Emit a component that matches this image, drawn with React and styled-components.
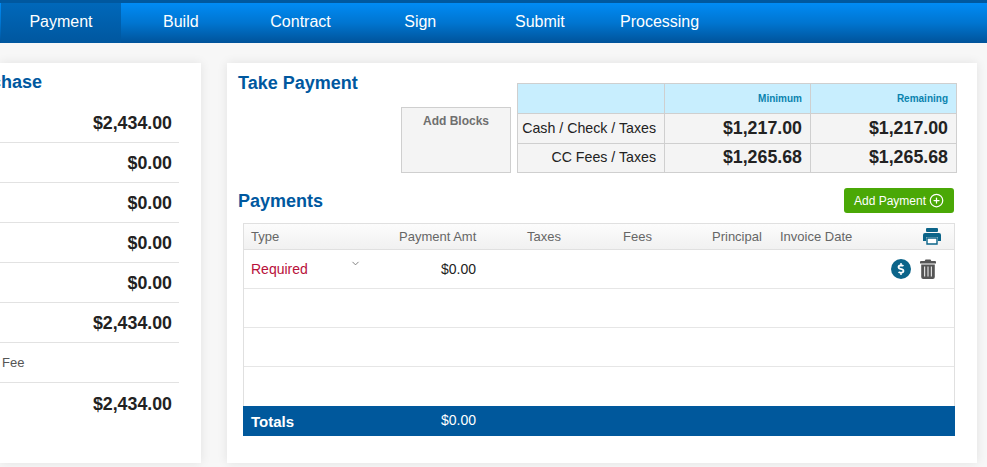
import React from "react";
import styled, { createGlobalStyle } from "styled-components";
import { ChevronDown, CirclePlus } from "lucide-react";
import { FaDollarSign } from "react-icons/fa";

const Global = createGlobalStyle`
	html, body {
		margin: 0;
		height: 467px;
		overflow: hidden;
		background: #f7f7f7;
		font-family: "Liberation Sans", Arial, sans-serif;
	}
	* { box-sizing: border-box; }
`;

const Nav = styled.nav`
	display: flex;
	height: 43px;
	padding-left: 1px;
	border-top: 3px solid #00589f;
	background: linear-gradient(#008bf5, #0075d0 50%, #00539a);
`;

const Tab = styled.div`
	width: ${props => (props.active ? "120px" : "119.7px")};
	display: flex;
	align-items: center;
	justify-content: center;
	padding-bottom: 2px;
	color: #fff;
	font-size: 16px;
	background: ${props => (props.active ? "linear-gradient(#0068ba, #00579f)" : "transparent")};
`;

const Main = styled.main`
	display: flex;
	gap: 26px;
	padding-top: 20px;
`;

const Card = styled.section`
	height: 400px;
	background: #fff;
	box-shadow: 0 0 10px rgba(0, 0, 0, 0.09);
`;

const LeftCard = styled(Card)`
	width: 201px;
	overflow: hidden;
	display: flex;
	justify-content: flex-end;
`;

const LeftInner = styled.div`
	flex: none;
	width: 260px;
	padding-right: 22px;
`;

const Title = styled.h2`
	margin: 0;
	color: #00589f;
	font-size: 18px;
	line-height: 22px;
	font-weight: bold;
`;

const LeftTitle = styled(Title)`
	margin: 8px 0 10px;
	text-align: right;
	padding-right: 137px;
`;

const SummaryRow = styled.div`
	height: 40px;
	display: flex;
	align-items: center;
	justify-content: flex-end;
	padding: 2px 7px 0 0;
	border-bottom: ${props => (props.last ? "none" : "1px solid #e2e2e2")};
	color: #222;
	font-size: 17.8px;
	font-weight: bold;
`;

const FeeRow = styled.div`
	height: 40px;
	display: flex;
	align-items: center;
	padding: 0 0 1px 61px;
	border-bottom: 1px solid #e2e2e2;
	color: #555;
	font-size: 13px;
`;

const RightCard = styled(Card)`
	width: 750px;
	padding: 20px 20px 0 11px;
`;

const TopRow = styled.div`
	display: flex;
	height: 90px;
`;

const TakeTitle = styled(Title)`
	flex: 1;
	margin-top: -11px;
`;

const BlocksBox = styled.div`
	width: 110px;
	height: 66px;
	margin: 24px 6px 0 0;
	padding-top: 6px;
	background: #f4f4f4;
	border: 1px solid #cfcfcf;
	color: #6f6f6f;
	font-size: 12px;
	font-weight: bold;
	text-align: center;
`;

const MinTable = styled.table`
	width: 440px;
	height: 90px;
	table-layout: fixed;
	border-collapse: collapse;
`;

const LabelCol = styled.col`
	width: 147px;
`;

const HeadCell = styled.th`
	height: 30px;
	padding: 0 8px 0 0;
	background: #c8eefe;
	border: 1px solid #cfcfcf;
	color: #0a83ae;
	font-size: 10px;
	text-align: right;
`;

const LabelCell = styled.td`
	padding: 0 8px ${props => (props.raised ? "2px" : "0")} 0;
	background: #f4f4f4;
	border: 1px solid #cfcfcf;
	color: #222;
	font-size: 14.2px;
	text-align: right;
`;

const MoneyCell = styled(LabelCell)`
	font-size: 17.8px;
	font-weight: bold;
`;

const PaymentsHead = styled.div`
	display: flex;
	align-items: center;
	justify-content: space-between;
	height: 25px;
	margin: 15px 3px 10px 0;
`;

const AddButton = styled.div`
	width: 110px;
	height: 25px;
	display: flex;
	align-items: center;
	justify-content: center;
	gap: 3px;
	background: #4aa806;
	border-radius: 3px;
	color: #fff;
	font-size: 12px;
`;

const PayTable = styled.div`
	width: 712px;
	margin-left: 5px;
	border: 1px solid #e0e0e0;
	border-bottom: none;
`;

const columns = "148px 128px 96px 89px 68px 1fr";

const PayHead = styled.div`
	display: grid;
	grid-template-columns: ${columns};
	align-items: center;
	height: 26px;
	padding-left: 7px;
	background: linear-gradient(#fcfcfc, #f1f1f1);
	border-bottom: 1px solid #e0e0e0;
	color: #666;
	font-size: 13px;
`;

const PayRow = styled.div`
	display: grid;
	grid-template-columns: ${columns};
	align-items: center;
	height: 39px;
	padding-left: 7px;
	border-bottom: ${props => (props.last ? "none" : "1px solid #e6e6e6")};
	font-size: 14px;
`;

const TypeCell = styled.div`
	display: flex;
	justify-content: space-between;
	padding-right: 38px;
	color: #b8103a;
	font-size: 14px;
`;

const AmtCell = styled.div`
	padding-right: 51px;
	color: #222;
	text-align: right;
`;

const Caret = styled(ChevronDown)`
	width: 11px;
	height: 11px;
	margin-top: -3px;
	color: #777;
`;

const InvoiceCell = styled.div`
	display: flex;
	align-items: center;
	justify-content: space-between;
	padding-right: 13px;
	white-space: nowrap;
`;

const ActionCell = styled.div`
	grid-column: 6;
	display: flex;
	align-items: center;
	justify-content: flex-end;
	gap: 9px;
	padding-right: 18px;
`;

const DollarBadge = styled.span`
	width: 20px;
	height: 20px;
	display: flex;
	align-items: center;
	justify-content: center;
	border-radius: 50%;
	background: #0b6489;
	color: #fff;
	font-size: 12px;
`;

const Totals = styled.div`
	display: grid;
	grid-template-columns: ${columns};
	align-items: center;
	width: 712px;
	height: 30px;
	margin-left: 5px;
	padding-left: 8px;
	background: #00589c;
	color: #fff;
`;

const TotalLabel = styled.div`
	font-size: 15px;
	font-weight: bold;
`;

const TotalAmt = styled.div`
	padding: 0 51px 3px 0;
	font-size: 14px;
	text-align: right;
`;

const PrintIcon = () => (
	<svg width="18" height="17" viewBox="0 0 18 17">
		<rect x="3" y="0" width="12" height="4" rx="1" fill="#0b6489" />
		<path d="M2 5h14a2 2 0 0 1 2 2v6h-3V9H3v4H0V7a2 2 0 0 1 2-2z" fill="#0b6489" />
		<path d="M4 10h10v6H4z" fill="#fff" stroke="#0b6489" strokeWidth="1.4" />
	</svg>
);

const TrashIcon = () => (
	<svg width="16" height="20" viewBox="0 0 16 20">
		<path d="M5.5 0.5h5l0.8 1.5H15a1 1 0 0 1 1 1V4.5H0V3a1 1 0 0 1 1-1h3.7z" fill="#555" />
		<path d="M1.2 5.5h13.6V18a2 2 0 0 1-2 2H3.2a2 2 0 0 1-2-2z" fill="#555" />
		<path d="M4.6 7.5v10M8 7.5v10M11.4 7.5v10" stroke="#ddd" strokeWidth="1.2" />
	</svg>
);

const tabs = ["Payment", "Build", "Contract", "Sign", "Submit", "Processing"];
const summary = ["$2,434.00", "$0.00", "$0.00", "$0.00", "$0.00", "$2,434.00"];

export default function App() {
	return (
		<>
			<Global />
			<Nav>
				{tabs.map((t, i) => <Tab key={t} active={i === 0}>{t}</Tab>)}
			</Nav>
			<Main>
				<LeftCard>
					<LeftInner>
						<LeftTitle>Purchase</LeftTitle>
						{summary.map((v, i) => <SummaryRow key={i}>{v}</SummaryRow>)}
						<FeeRow>Fee</FeeRow>
						<SummaryRow last>$2,434.00</SummaryRow>
					</LeftInner>
				</LeftCard>
				<RightCard>
					<TopRow>
						<TakeTitle>Take Payment</TakeTitle>
						<BlocksBox>Add Blocks</BlocksBox>
						<MinTable>
							<colgroup>
								<LabelCol />
								<col />
								<col />
							</colgroup>
							<thead>
								<tr>
									<HeadCell />
									<HeadCell>Minimum</HeadCell>
									<HeadCell>Remaining</HeadCell>
								</tr>
							</thead>
							<tbody>
								<tr>
									<LabelCell>Cash / Check / Taxes</LabelCell>
									<MoneyCell>$1,217.00</MoneyCell>
									<MoneyCell>$1,217.00</MoneyCell>
								</tr>
								<tr>
									<LabelCell raised>CC Fees / Taxes</LabelCell>
									<MoneyCell>$1,265.68</MoneyCell>
									<MoneyCell>$1,265.68</MoneyCell>
								</tr>
							</tbody>
						</MinTable>
					</TopRow>
					<PaymentsHead>
						<Title>Payments</Title>
						<AddButton>Add Payment <CirclePlus size={15} /></AddButton>
					</PaymentsHead>
					<PayTable>
						<PayHead>
							<div>Type</div>
							<div>Payment Amt</div>
							<div>Taxes</div>
							<div>Fees</div>
							<div>Principal</div>
							<InvoiceCell>Invoice Date <PrintIcon /></InvoiceCell>
						</PayHead>
						<PayRow>
							<TypeCell>Required <Caret /></TypeCell>
							<AmtCell>$0.00</AmtCell>
							<ActionCell>
								<DollarBadge><FaDollarSign /></DollarBadge>
								<TrashIcon />
							</ActionCell>
						</PayRow>
						<PayRow />
						<PayRow />
						<PayRow last />
					</PayTable>
					<Totals>
						<TotalLabel>Totals</TotalLabel>
						<TotalAmt>$0.00</TotalAmt>
					</Totals>
				</RightCard>
			</Main>
		</>
	);
}
